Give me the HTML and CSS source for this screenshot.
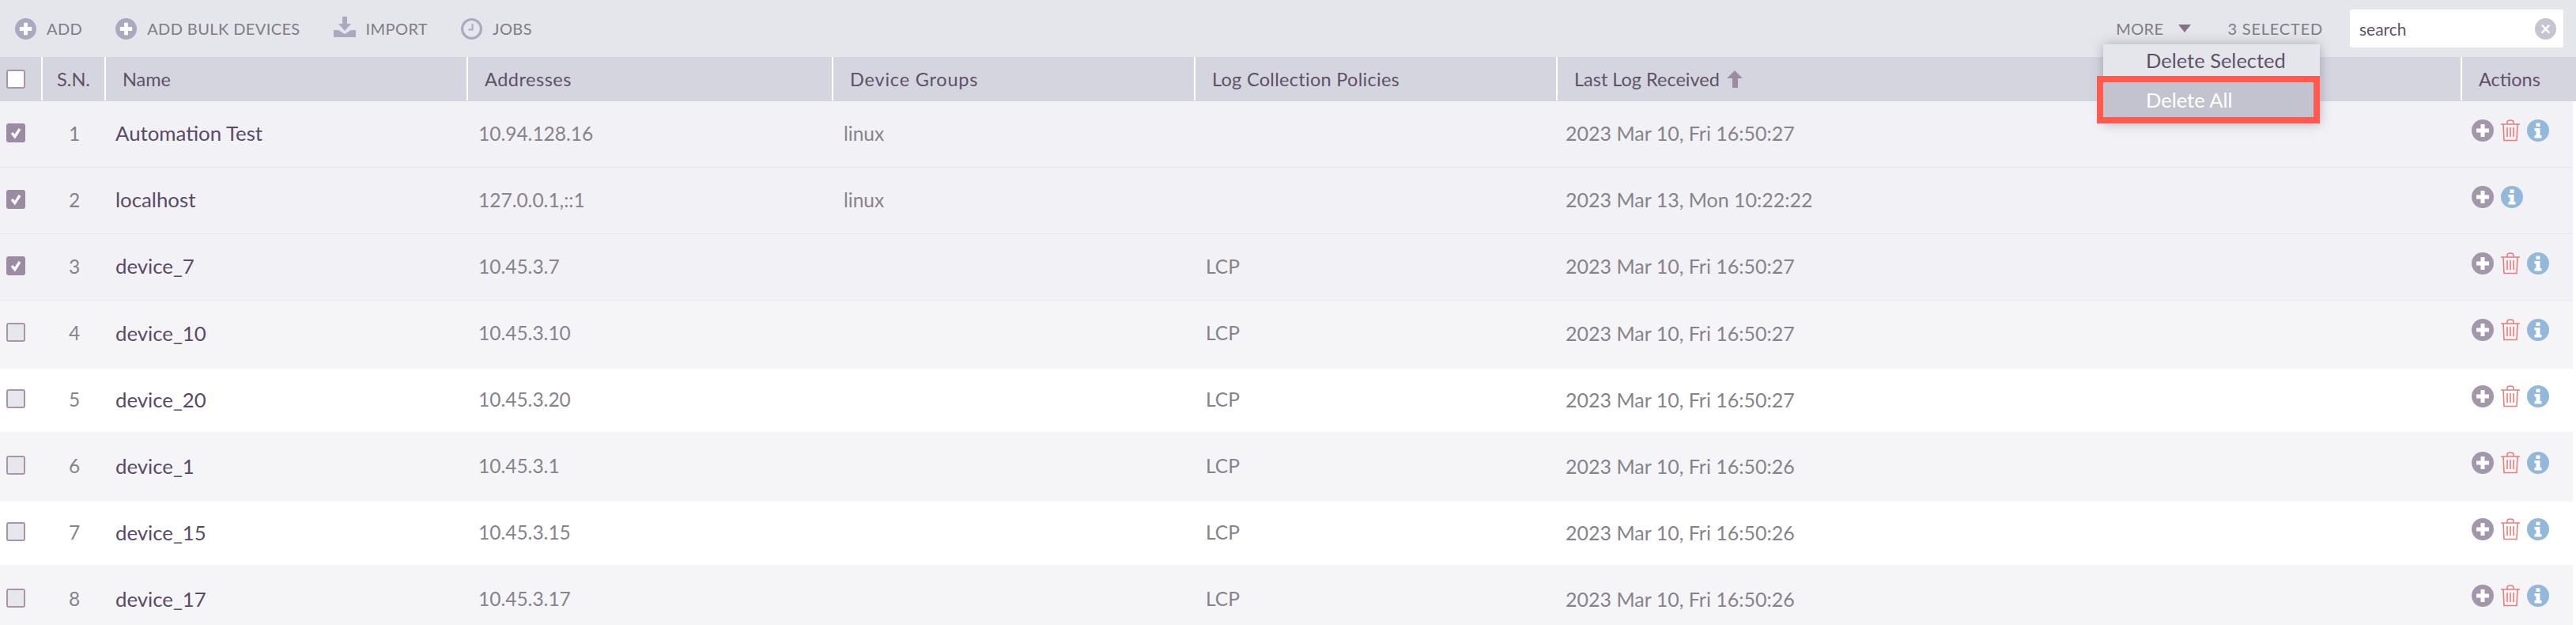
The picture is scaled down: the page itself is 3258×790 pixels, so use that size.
FILE: index.html
```html
<!DOCTYPE html>
<html lang="en">
<head>
<meta charset="utf-8">
<title>Devices</title>
<link rel="stylesheet" href="styles.css">
</head>
<body>
<svg class="defs" width="0" height="0">
  <symbol id="i-plus" viewBox="0 0 28 28"><circle cx="14" cy="14" r="14"/><path fill="#fff" d="M11.500 6h5v5.500H22v5h-5.500V22h-5v-5.500H6v-5h5.500z"/></symbol>
  <symbol id="i-info" viewBox="0 0 28 28"><circle cx="14" cy="14" r="14"/><path fill="#fff" d="M11.500 4.500h5v4.500h-5zM9.500 11h7v9h2v3.500h-9V20h2v-5.500h-2z"/></symbol>
  <symbol id="i-trash" viewBox="0 0 24 28"><path fill="none" stroke="currentColor" stroke-width="1.600" d="M0 6h24M3 6l1 20.500h16L21 6M8 6V3.500C8 1.500 10 1 12 1s4 .5 4 2.500V6M8 10v12M12 10v12M16 10v12"/></symbol>
  <symbol id="i-check" viewBox="0 0 24 24"><path fill="none" stroke="#fff" stroke-width="4" d="M6 12l4.500 5.500L18 6"/></symbol>
</svg>
<div class="page">
  <header class="toolbar">
    <a class="tool"><svg class="tool-icon"><use href="#i-plus"/></svg>ADD</a>
    <a class="tool"><svg class="tool-icon"><use href="#i-plus"/></svg>ADD BULK DEVICES</a>
    <a class="tool tool-import"><svg class="tool-icon" viewBox="0 0 28 26"><path d="M11 0h6v9h5l-8 9-8-9h5zM0 17h6l8 5 8-5h6v9H0z"/></svg>IMPORT</a>
    <a class="tool"><svg class="tool-icon" viewBox="0 0 26 26"><circle cx="13" cy="13" r="11.500" fill="none" stroke="#a9a9bf" stroke-width="3"/><path d="M14 7v7H9" fill="none" stroke="#a9a9bf" stroke-width="2"/></svg>JOBS</a>
    <div class="toolbar-right">
      <span class="more">MORE<span class="caret"></span></span>
      <span class="count">3 SELECTED</span>
      <div class="search"><span>search</span><span class="clear">×</span></div>
    </div>
  </header>

  <div class="thead grid">
    <div class="th th-check"><span class="box box-head"></span></div>
    <div class="th th-sn">S.N.</div>
    <div class="th">Name</div>
    <div class="th th-addr">Addresses</div>
    <div class="th th-groups">Device Groups</div>
    <div class="th th-policies">Log Collection Policies</div>
    <div class="th">Last Log Received<svg class="sort" viewBox="0 0 20 22"><path d="M10 0l10 10h-6v12H7V10H0z"/></svg></div>
    <div class="th th-last">Actions</div>
  </div>

  <div class="row grid row-selected">
    <div class="td td-check"><span class="box box-on"><svg><use href="#i-check"/></svg></span></div>
    <div class="td td-sn">1</div>
    <div class="td td-name">Automation Test</div>
    <div class="td">10.94.128.16</div>
    <div class="td">linux</div>
    <div class="td"></div>
    <div class="td td-date">2023 Mar 10, Fri 16:50:27</div>
    <div class="td td-actions"><svg class="act act-plus"><use href="#i-plus"/></svg><svg class="act act-trash"><use href="#i-trash"/></svg><svg class="act act-info"><use href="#i-info"/></svg></div>
  </div>
  <div class="row grid row-selected">
    <div class="td td-check"><span class="box box-on"><svg><use href="#i-check"/></svg></span></div>
    <div class="td td-sn">2</div>
    <div class="td td-name">localhost</div>
    <div class="td">127.0.0.1,::1</div>
    <div class="td">linux</div>
    <div class="td"></div>
    <div class="td td-date">2023 Mar 13, Mon 10:22:22</div>
    <div class="td td-actions"><svg class="act act-plus"><use href="#i-plus"/></svg><svg class="act act-info"><use href="#i-info"/></svg></div>
  </div>
  <div class="row grid row-selected">
    <div class="td td-check"><span class="box box-on"><svg><use href="#i-check"/></svg></span></div>
    <div class="td td-sn">3</div>
    <div class="td td-name">device_7</div>
    <div class="td">10.45.3.7</div>
    <div class="td"></div>
    <div class="td">LCP</div>
    <div class="td td-date">2023 Mar 10, Fri 16:50:27</div>
    <div class="td td-actions"><svg class="act act-plus"><use href="#i-plus"/></svg><svg class="act act-trash"><use href="#i-trash"/></svg><svg class="act act-info"><use href="#i-info"/></svg></div>
  </div>
  <div class="row grid stripe">
    <div class="td td-check"><span class="box"></span></div>
    <div class="td td-sn">4</div>
    <div class="td td-name">device_10</div>
    <div class="td">10.45.3.10</div>
    <div class="td"></div>
    <div class="td">LCP</div>
    <div class="td td-date">2023 Mar 10, Fri 16:50:27</div>
    <div class="td td-actions"><svg class="act act-plus"><use href="#i-plus"/></svg><svg class="act act-trash"><use href="#i-trash"/></svg><svg class="act act-info"><use href="#i-info"/></svg></div>
  </div>
  <div class="row grid">
    <div class="td td-check"><span class="box"></span></div>
    <div class="td td-sn">5</div>
    <div class="td td-name">device_20</div>
    <div class="td">10.45.3.20</div>
    <div class="td"></div>
    <div class="td">LCP</div>
    <div class="td td-date">2023 Mar 10, Fri 16:50:27</div>
    <div class="td td-actions"><svg class="act act-plus"><use href="#i-plus"/></svg><svg class="act act-trash"><use href="#i-trash"/></svg><svg class="act act-info"><use href="#i-info"/></svg></div>
  </div>
  <div class="row grid stripe">
    <div class="td td-check"><span class="box"></span></div>
    <div class="td td-sn">6</div>
    <div class="td td-name">device_1</div>
    <div class="td">10.45.3.1</div>
    <div class="td"></div>
    <div class="td">LCP</div>
    <div class="td td-date">2023 Mar 10, Fri 16:50:26</div>
    <div class="td td-actions"><svg class="act act-plus"><use href="#i-plus"/></svg><svg class="act act-trash"><use href="#i-trash"/></svg><svg class="act act-info"><use href="#i-info"/></svg></div>
  </div>
  <div class="row grid">
    <div class="td td-check"><span class="box"></span></div>
    <div class="td td-sn">7</div>
    <div class="td td-name">device_15</div>
    <div class="td">10.45.3.15</div>
    <div class="td"></div>
    <div class="td">LCP</div>
    <div class="td td-date">2023 Mar 10, Fri 16:50:26</div>
    <div class="td td-actions"><svg class="act act-plus"><use href="#i-plus"/></svg><svg class="act act-trash"><use href="#i-trash"/></svg><svg class="act act-info"><use href="#i-info"/></svg></div>
  </div>
  <div class="row grid stripe">
    <div class="td td-check"><span class="box"></span></div>
    <div class="td td-sn">8</div>
    <div class="td td-name">device_17</div>
    <div class="td">10.45.3.17</div>
    <div class="td"></div>
    <div class="td">LCP</div>
    <div class="td td-date">2023 Mar 10, Fri 16:50:26</div>
    <div class="td td-actions"><svg class="act act-plus"><use href="#i-plus"/></svg><svg class="act act-trash"><use href="#i-trash"/></svg><svg class="act act-info"><use href="#i-info"/></svg></div>
  </div>

  <div class="menu">
    <div class="menu-item">Delete Selected</div>
    <div class="menu-item menu-active">Delete All</div>
  </div>
</div>
</body>
</html>
```
FILE: styles.css
```css
* { box-sizing: border-box; }
html, body { margin: 0; height: 100%; overflow: hidden; background: #fff; }
body { font-family: Lato, "Open Sans", "Liberation Sans", sans-serif; }
.defs { position: absolute; }
.page { position: relative; width: 3258px; height: 790px; overflow: hidden; }

.toolbar {
  display: flex; align-items: center; height: 72px;
  padding: 0 16px 0 19px; background: #e5e6ec;
  color: #7f7b83; font-size: 20px; letter-spacing: .4px;
}
.tool { display: flex; align-items: center; margin-right: 42px; }
.tool-icon { width: 27px; height: 27px; margin-right: 13px; fill: #a9a9bf; }
.tool-import .tool-icon { width: 28px; height: 26px; margin-top: -4px; }
.toolbar-right { display: flex; align-items: center; margin-left: auto; }
.more { display: flex; align-items: center; }
.caret {
  width: 0; height: 0; margin: 0 46px 0 19px;
  border-left: 8px solid transparent; border-right: 8px solid transparent;
  border-top: 10px solid #84728c;
}
.count { margin-right: 34px; letter-spacing: .8px; }
.search {
  display: flex; align-items: center; justify-content: space-between;
  width: 270px; height: 48px; padding: 0 9px 0 12px;
  background: #fff; border-radius: 3px; color: #5f5068;
  font-size: 21px; letter-spacing: 0;
}
.clear {
  display: flex; align-items: center; justify-content: center;
  width: 27px; height: 27px; border-radius: 50%;
  background: #c5c4d0; color: #fff; font-size: 24px; line-height: 1; font-weight: 700;
}

.grid {
  display: grid;
  grid-template-columns: 54px 80px 458px 462px 458px 458px 1144px 144px;
}
.thead { height: 56px; background: #d4d5de; color: #5f5068; font-size: 23.500px; }
.th {
  display: flex; align-items: center; height: 55px;
  padding-left: 21px; border-right: 2px solid #fff;
}
.th-check { padding-left: 8px; }
.th-sn { justify-content: center; padding-left: 0; }
.th-addr { letter-spacing: .5px; }
.th-groups { letter-spacing: .8px; }
.th-policies { letter-spacing: .3px; }
.th-last { border-right: 0; }
.sort { width: 20px; height: 22px; margin-left: 9px; fill: #9b8ca3; }

.row {
  position: relative; width: 3254px; height: 84px; background: #fff;
  grid-template-columns: 54px 80px 458px 462px 458px 458px 1144px 140px;
  color: #87838b; font-size: 24.500px;
}
.stripe { z-index: 1; background: #f5f5f8; box-shadow: 0 -2px 0 #f5f5f8, 0 2px 0 #f5f5f8; }
.row-selected { z-index: 2; background: #f2f1f6; border-bottom: 1px solid #e7e7ec; }
.td { display: flex; align-items: center; padding: 0 13px 3px; min-width: 0; white-space: nowrap; }
.td-check { padding: 0 0 4px 8px; }
.td-sn { justify-content: center; padding: 0 0 3px; }
.td-name { color: #5a4a68; padding-left: 12px; font-size: 25.800px; }
.td-date { padding-left: 10px; font-size: 25px; }
.td-actions { padding: 0 0 10px 12px; gap: 9px; }

.box {
  display: block; width: 24px; height: 24px; border-radius: 3px;
  background: #e6e7ec; border: 2px solid #ab94a8;
}
.box-head { background: #fff; }
.box-on { background: #9b8ca3; border-color: #9b8ca3; }
.box-on svg { display: block; width: 20px; height: 20px; }

.act { flex: none; width: 28px; height: 28px; }
.act-plus { fill: #a397ab; }
.act-info { fill: #93b8da; }
.act-trash { width: 24px; color: #e3807d; }

.menu {
  position: absolute; z-index: 5; top: 56px; left: 2660px; width: 274px;
  background: #e5e6ec; box-shadow: 0 0 14px rgba(90, 80, 110, .4);
  color: #5f5068; font-size: 25.500px;
}
.menu-item { display: flex; align-items: center; height: 40px; padding-left: 54px; }
.menu-active {
  height: 44px; margin: 8px 8px 8px 0;
  background: #c3c2cf; color: #fff; outline: 8px solid #ff5a4d;
}
```
